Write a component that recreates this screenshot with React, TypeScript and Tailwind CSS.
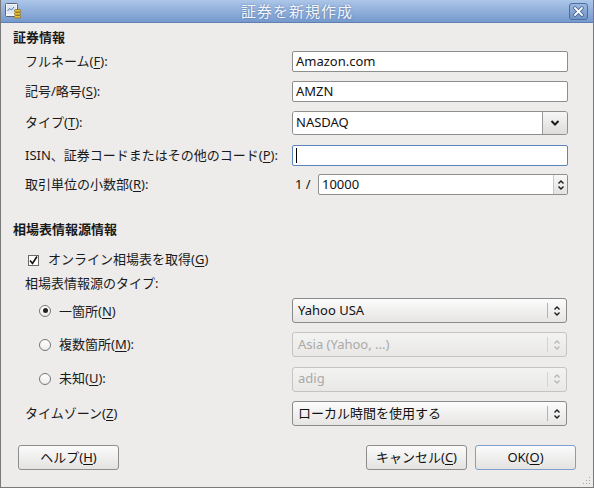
import React from "react";

const FONT = { fontFamily: '"Noto Sans", "Noto Sans CJK JP", sans-serif' };

function U({ children }: { children: React.ReactNode }) {
  return <span className="underline underline-offset-2">{children}</span>;
}

function WindowIcon() {
  return (
    <svg width="16" height="16" viewBox="0 0 16 16">
      <rect x="0.5" y="0.5" width="12" height="13" rx="1" fill="#f4f6f8" stroke="#56667a" />
      <rect x="2" y="2" width="9" height="9" fill="#dfe8f2" />
      <path d="M2.5 8 L4.5 5.5 L6.5 7 L9 4" stroke="#4a78b0" strokeWidth="1" fill="none" />
      <rect x="9.5" y="6.5" width="6" height="2.5" rx="1" fill="#e8c23a" stroke="#8a6d10" strokeWidth="0.8" />
      <rect x="9.5" y="9.5" width="6" height="2.5" rx="1" fill="#e8c23a" stroke="#8a6d10" strokeWidth="0.8" />
      <rect x="9.5" y="12.5" width="6" height="2.5" rx="1" fill="#e8c23a" stroke="#8a6d10" strokeWidth="0.8" />
    </svg>
  );
}

function CloseButton() {
  return (
    <div className="w-[19px] h-[17px] rounded-[3px] border border-[#4d6f9f] bg-gradient-to-b from-[#9cb8e0] to-[#6f92c6] flex items-center justify-center">
      <svg width="11" height="11" viewBox="0 0 11 11">
        <path d="M2 2 L9 9 M9 2 L2 9" stroke="#3f5f8f" strokeWidth="3.4" strokeLinecap="round" />
        <path d="M2 2 L9 9 M9 2 L2 9" stroke="#ffffff" strokeWidth="1.8" strokeLinecap="round" />
      </svg>
    </div>
  );
}

function UpDown({ disabled }: { disabled?: boolean }) {
  const c = disabled ? "#b8b8b8" : "#1c1c1c";
  return (
    <svg width="8" height="12" viewBox="0 0 8 12">
      <path d="M1.5 4.5 L4 2 L6.5 4.5" stroke={c} strokeWidth="1.4" fill="none" />
      <path d="M1.5 7.5 L4 10 L6.5 7.5" stroke={c} strokeWidth="1.4" fill="none" />
    </svg>
  );
}

function TextInput({ value, focused }: { value?: string; focused?: boolean }) {
  return (
    <div
      className={
        "w-[276px] h-[21px] bg-white rounded-[2px] border flex items-center pl-[3px] text-[13px] text-[#111] " +
        (focused ? "border-[#5b84bd]" : "border-[#8e8e8e]")
      }
    >
      {value}
      {focused && <div className="w-px h-[15px] bg-black" />}
    </div>
  );
}

function ComboButton({ value, disabled }: { value: string; disabled?: boolean }) {
  return (
    <div
      className={
        "w-[275px] h-[25px] rounded-[3px] border flex items-center text-[13px] bg-gradient-to-b " +
        (disabled
          ? "border-[#c4c4c4] from-[#f3f3f2] to-[#e9e8e7] text-[#a9a9a9]"
          : "border-[#8a8a8a] from-[#fcfcfc] to-[#e6e5e4] text-[#111]")
      }
    >
      <div className="flex-1 pl-[5px]">{value}</div>
      <div className={"w-px h-[15px] " + (disabled ? "bg-[#d4d4d4]" : "bg-[#b3b3b3]")} />
      <div className="w-[18px] flex justify-center">
        <UpDown disabled={disabled} />
      </div>
    </div>
  );
}

function Label({ children }: { children: React.ReactNode }) {
  return <div className="w-[267px] text-[13px] text-[#1a1a1a]">{children}</div>;
}

function Radio({ checked }: { checked?: boolean }) {
  return (
    <div className="w-[12px] h-[12px] rounded-full border border-[#767676] bg-gradient-to-b from-white to-[#ececec] flex items-center justify-center">
      {checked && <div className="w-[5px] h-[5px] rounded-full bg-[#222]" />}
    </div>
  );
}

function Button({ children, primary }: { children: React.ReactNode; primary?: boolean }) {
  return (
    <div
      className={
        "w-[101px] h-[25px] rounded-[3px] border bg-gradient-to-b from-[#fbfbfb] to-[#e4e3e2] flex items-center justify-center text-[13px] text-[#111] " +
        (primary ? "border-[#7d9fcf]" : "border-[#8e8e8e]")
      }
    >
      {children}
    </div>
  );
}

export default function App() {
  return (
    <div
      style={FONT}
      className="w-[594px] h-[488px] bg-[#edeceb] border-x border-b border-[#7a7a7a] flex flex-col overflow-hidden"
    >
      {/* title bar */}
      <div className="h-[23px] -mx-px bg-gradient-to-b from-[#adc6e8] to-[#7699cd] border-b border-[#5f7fb0] flex items-center px-[5px] relative">
        <WindowIcon />
        <div className="absolute left-0 right-0 top-0 h-[22px] flex items-center justify-center text-[15px] text-[#f2f6fb] tracking-[1px] [text-shadow:0_0_2px_#4d6f9f]">
          証券を新規作成
        </div>
        <div className="ml-auto mr-[1px]">
          <CloseButton />
        </div>
      </div>

      <div className="flex flex-col pl-[12px] text-[#1a1a1a]">
        <div className="mt-[7px] h-[16px] flex items-center text-[13px] font-bold">証券情報</div>

        <div className="pl-[12px] flex flex-col">
          <div className="mt-[5px] flex items-center h-[21px]">
            <Label>
              フルネーム(<U>F</U>):
            </Label>
            <TextInput value="Amazon.com" />
          </div>
          <div className="mt-[9px] flex items-center h-[21px]">
            <Label>
              記号/略号(<U>S</U>):
            </Label>
            <TextInput value="AMZN" />
          </div>
          <div className="mt-[9px] flex items-center h-[24px]">
            <Label>
              タイプ(<U>T</U>):
            </Label>
            <div className="w-[276px] h-[24px] flex rounded-[3px] border border-[#8e8e8e] overflow-hidden">
              <div className="flex-1 bg-white flex items-center pl-[3px] text-[13px] text-[#111]">NASDAQ</div>
              <div className="w-[25px] border-l border-[#9a9a9a] bg-gradient-to-b from-[#f6f6f6] to-[#dedddc] flex items-center justify-center">
                <svg width="10" height="8" viewBox="0 0 10 8">
                  <path d="M1.5 2 L5 5.5 L8.5 2" stroke="#1a1a1a" strokeWidth="2" fill="none" />
                </svg>
              </div>
            </div>
          </div>
          <div className="mt-[10px] flex items-center h-[21px]">
            <Label>
              ISIN、証券コードまたはその他のコード(<U>P</U>):
            </Label>
            <TextInput focused />
          </div>
          <div className="mt-[8px] flex items-center h-[21px]">
            <Label>
              取引単位の小数部(<U>R</U>):
            </Label>
            <div className="w-[276px] flex items-center">
              <div className="w-[26px] pl-[3px] text-[13px] text-[#111]">1 /</div>
              <div className="flex-1 h-[21px] bg-white rounded-[2px] border border-[#8e8e8e] flex items-center pl-[3px] text-[13px] text-[#111]">
                <div className="flex-1">10000</div>
                <div className="w-[14px] h-full border-l border-[#c8c8c8] bg-gradient-to-b from-[#f8f8f8] to-[#e2e2e2] flex items-center justify-center">
                  <UpDown />
                </div>
              </div>
            </div>
          </div>
        </div>

        <div className="mt-[27px] h-[16px] flex items-center text-[13px] font-bold">相場表情報源情報</div>

        <div className="pl-[12px] flex flex-col">
          <div className="mt-[14px] h-[16px] flex items-center text-[13px]">
            <div className="ml-[3px] w-[11px] h-[11px] border border-[#6a6a6a] bg-white flex items-center justify-center">
              <svg width="9" height="9" viewBox="0 0 9 9">
                <path d="M1 4.5 L3.5 7.5 L8 0.5" stroke="#111" strokeWidth="1.6" fill="none" />
              </svg>
            </div>
            <div className="ml-[9px]">
              オンライン相場表を取得(<U>G</U>)
            </div>
          </div>
          <div className="mt-[8px] h-[16px] flex items-center text-[13px]">相場表情報源のタイプ:</div>

          <div className="mt-[6px] flex items-center h-[25px]">
            <div className="w-[267px] flex items-center text-[13px]">
              <div className="ml-[14px]">
                <Radio checked />
              </div>
              <div className="ml-[8px] mt-[2px]">
                一箇所(<U>N</U>)
              </div>
            </div>
            <ComboButton value="Yahoo USA" />
          </div>
          <div className="mt-[9px] flex items-center h-[25px]">
            <div className="w-[267px] flex items-center text-[13px]">
              <div className="ml-[14px]">
                <Radio />
              </div>
              <div className="ml-[8px]">
                複数箇所(<U>M</U>):
              </div>
            </div>
            <ComboButton value="Asia (Yahoo, ...)" disabled />
          </div>
          <div className="mt-[10px] flex items-center h-[24px]">
            <div className="w-[267px] flex items-center text-[13px]">
              <div className="ml-[14px]">
                <Radio />
              </div>
              <div className="ml-[8px]">
                未知(<U>U</U>):
              </div>
            </div>
            <ComboButton value="adig" disabled />
          </div>
          <div className="mt-[10px] flex items-center h-[25px]">
            <Label>
              タイムゾーン(<U>Z</U>)
            </Label>
            <ComboButton value="ローカル時間を使用する" />
          </div>
        </div>
      </div>

      <div className="mt-[19px] flex items-center pl-[17px] pr-[17px]">
        <Button>
          ヘルプ(<U>H</U>)
        </Button>
        <div className="flex-1" />
        <Button>
          キャンセル(<U>C</U>)
        </Button>
        <div className="w-[8px]" />
        <Button primary>
          OK(<U>O</U>)
        </Button>
      </div>

      <div className="flex-1 flex justify-end items-end pr-[2px] pb-[2px]">
        <svg width="10" height="10" viewBox="0 0 10 10">
          {[
            [8, 2],
            [5, 5],
            [8, 5],
            [2, 8],
            [5, 8],
            [8, 8],
          ].map(([x, y], i) => (
            <rect key={i} x={x} y={y} width="1" height="1" fill="#a5a5a5" />
          ))}
        </svg>
      </div>
    </div>
  );
}
